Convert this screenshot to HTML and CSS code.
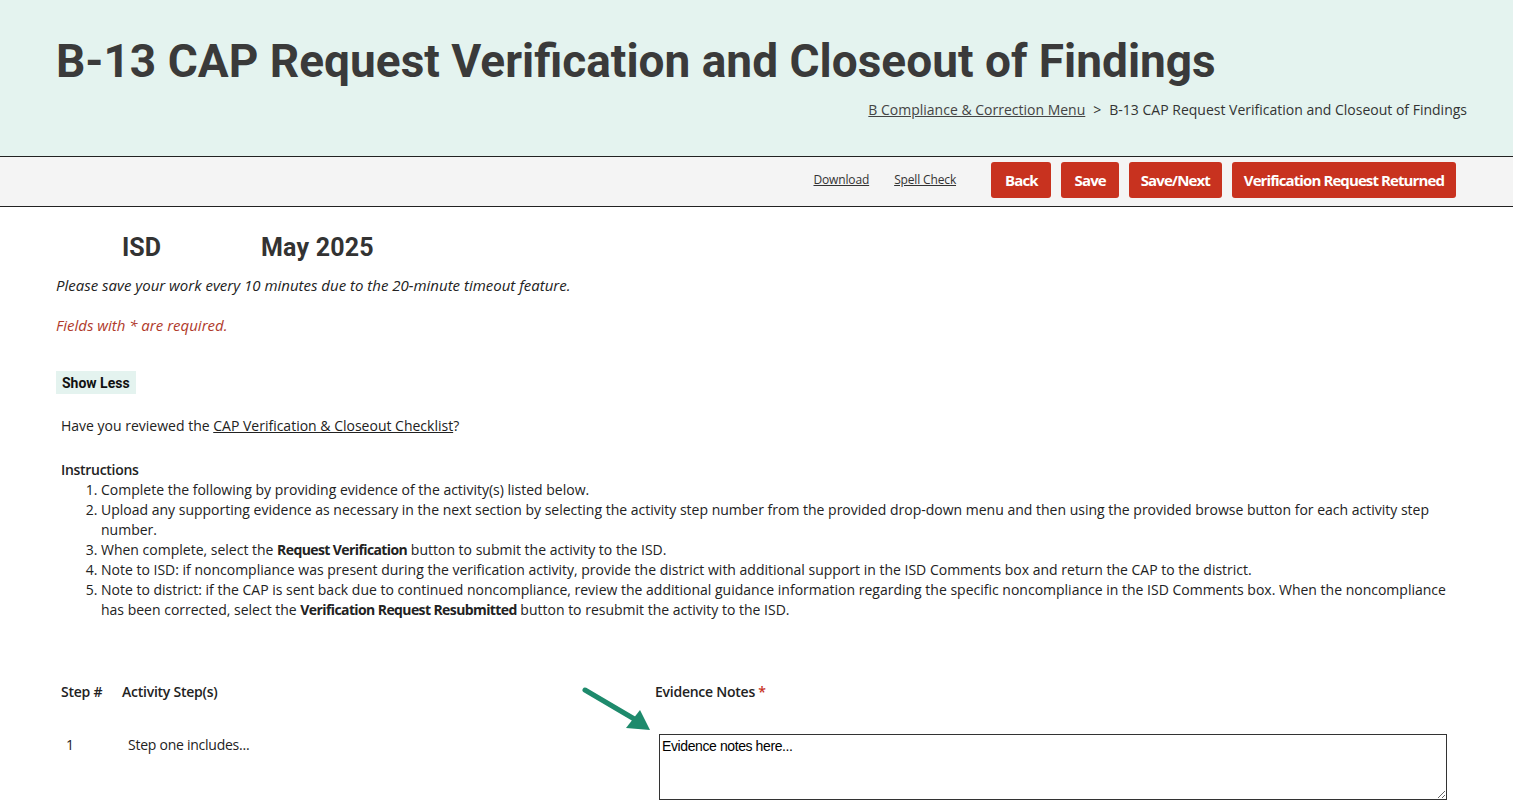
FILE: index.html
```html
<!DOCTYPE html>
<html lang="en">
<head>
<meta charset="utf-8">
<title>B-13 CAP Request Verification and Closeout of Findings</title>
<link rel="stylesheet" href="styles.css">
</head>
<body>
<header class="banner">
  <h1 class="title">B-13 CAP Request Verification and Closeout of Findings</h1>
  <nav class="crumbs"><a href="#">B Compliance &amp; Correction Menu</a><span class="sep">&gt;</span><span>B-13 CAP Request Verification and Closeout of Findings</span></nav>
</header>
<div class="toolbar">
  <a class="tlink" href="#">Download</a>
  <a class="tlink" href="#">Spell Check</a>
  <div class="btns">
    <button class="btn btn-sm">Back</button>
    <button class="btn btn-sm">Save</button>
    <button class="btn">Save/Next</button>
    <button class="btn">Verification Request Returned</button>
  </div>
</div>
<main class="content">
  <div class="meta"><span class="isd">ISD</span><span class="date">May 2025</span></div>
  <p class="note">Please save your work every 10 minutes due to the 20-minute timeout feature.</p>
  <p class="req">Fields with * are required.</p>
  <button class="toggle">Show Less</button>
  <p class="reviewed">Have you reviewed the <a href="#">CAP Verification &amp; Closeout Checklist</a>?</p>
  <div class="instructions">
    <div class="ihead">Instructions</div>
    <ol class="ilist">
      <li>Complete the following by providing evidence of the activity(s) listed below.</li>
      <li>Upload any supporting evidence as necessary in the next section by selecting the activity step number from the provided drop-down menu and then using the provided browse button for each activity step number.</li>
      <li>When complete, select the <b>Request Verification</b> button to submit the activity to the ISD.</li>
      <li>Note to ISD: if noncompliance was present during the verification activity, provide the district with additional support in the ISD Comments box and return the CAP to the district.</li>
      <li>Note to district: if the CAP is sent back due to continued noncompliance, review the additional guidance information regarding the specific noncompliance in the ISD Comments box. When the noncompliance has been corrected, select the <b>Verification Request Resubmitted</b> button to resubmit the activity to the ISD.</li>
    </ol>
  </div>
  <div class="grid">
    <div class="th c1">Step #</div>
    <div class="th c2">Activity Step(s)</div>
    <div class="th c3">
      <svg class="arrow" width="80" height="50" viewBox="0 0 80 50"><line x1="5" y1="4" x2="56" y2="34" stroke="#1e8a6c" stroke-width="5" stroke-linecap="round"/><polygon points="70,44 46,42 60,24" fill="#1e8a6c"/></svg>
      Evidence Notes <span class="star">*</span>
    </div>
    <div class="td c1 num">1</div>
    <div class="td c2 step">Step one includes...</div>
    <div class="td c3"><textarea class="notes">Evidence notes here...</textarea></div>
  </div>
</main>
</body>
</html>
```
FILE: styles.css
```css
* { box-sizing: border-box; }
html, body { margin: 0; padding: 0; background: #fff; }
body { font-family: "Open Sans", "Liberation Sans", sans-serif; color: #222; font-size: 14px; }
a { color: inherit; }

.banner {
  background: #e4f3ef;
  height: 157px;
  border-bottom: 1px solid #222;
  padding: 32px 46px 0 56px;
  display: flex;
  flex-direction: column;
}
.title {
  margin: 0;
  font-family: Roboto, "Liberation Sans", sans-serif;
  font-weight: 700;
  font-size: 46px;
  line-height: 58px;
  color: #3a3a3a;
}
.crumbs {
  align-self: flex-end;
  margin-top: 10px;
  font-size: 14px;
  color: #333;
}
.crumbs a { color: #444; }
.crumbs .sep { margin: 0 8px; }

.toolbar {
  height: 50px;
  background: #f4f4f4;
  border-bottom: 1px solid #222;
  display: flex;
  align-items: center;
  justify-content: flex-end;
  padding: 0 57px 4px 0;
}
.tlink { font-size: 12px; color: #333; letter-spacing: -0.15px; margin-right: 25px; }
.tlink + .tlink { margin-right: 35px; }
.btns { display: flex; gap: 10px; }
.btn {
  background: #c8321f;
  color: #fff;
  border: none;
  border-radius: 3px;
  height: 36px;
  padding: 0 12px;
  font-family: "Open Sans", sans-serif;
  font-weight: 700;
  font-size: 15px;
  letter-spacing: -0.9px;
}
.btn-sm { padding: 0 13px 0 14px; }

.content { padding: 0 56px; }
.meta {
  display: flex;
  font-family: Roboto, sans-serif;
  font-weight: 700;
  font-size: 25px;
  color: #333;
  margin-top: 26px;
  line-height: 30px;
}
.isd { margin-left: 66px; width: 139px; }
.date { letter-spacing: 0.2px; }
.note { margin: 12px 0 0; font-style: italic; font-size: 15px; line-height: 20px; }
.req { margin: 20px 0 0; font-style: italic; font-size: 15px; color: #b03a2b; line-height: 20px; }
.toggle {
  margin-top: 36px;
  background: #e4f3ef;
  border: none;
  font-family: Roboto, sans-serif;
  font-weight: 700;
  font-size: 14px;
  color: #111;
  padding: 3px 6px;
  height: 23px;
}
.reviewed { margin: 22px 0 0 5px; line-height: 20px; }
.instructions { margin: 24px 0 0 5px; line-height: 20px; }
.ihead { font-weight: 600; letter-spacing: -0.3px; }
.ilist { margin: 0; padding-left: 40px; padding-right: 0; }
.ilist b { font-weight: 700; letter-spacing: -0.6px; }

.grid {
  display: grid;
  grid-template-columns: 61px 533px 1fr;
  margin: 62px 10px 0 5px;
  letter-spacing: -0.25px;
}
.th { font-weight: 600; line-height: 20px; }
.c3 { position: relative; }
.arrow { position: absolute; left: -75px; top: 4px; }
.star { color: #c8321f; }
.td { margin-top: 33px; }
.num { padding-left: 5px; }
.step { padding-left: 6px; }
.td.c3 { margin-top: 32px; padding-left: 4px; }
.notes {
  display: block;
  width: 788px;
  height: 66px;
  border: 1px solid #333;
  border-radius: 0;
  font-family: "Liberation Sans", Arial, sans-serif;
  font-size: 14px;
  padding: 3px 2px;
  resize: vertical;
  letter-spacing: -0.4px;
}
```
